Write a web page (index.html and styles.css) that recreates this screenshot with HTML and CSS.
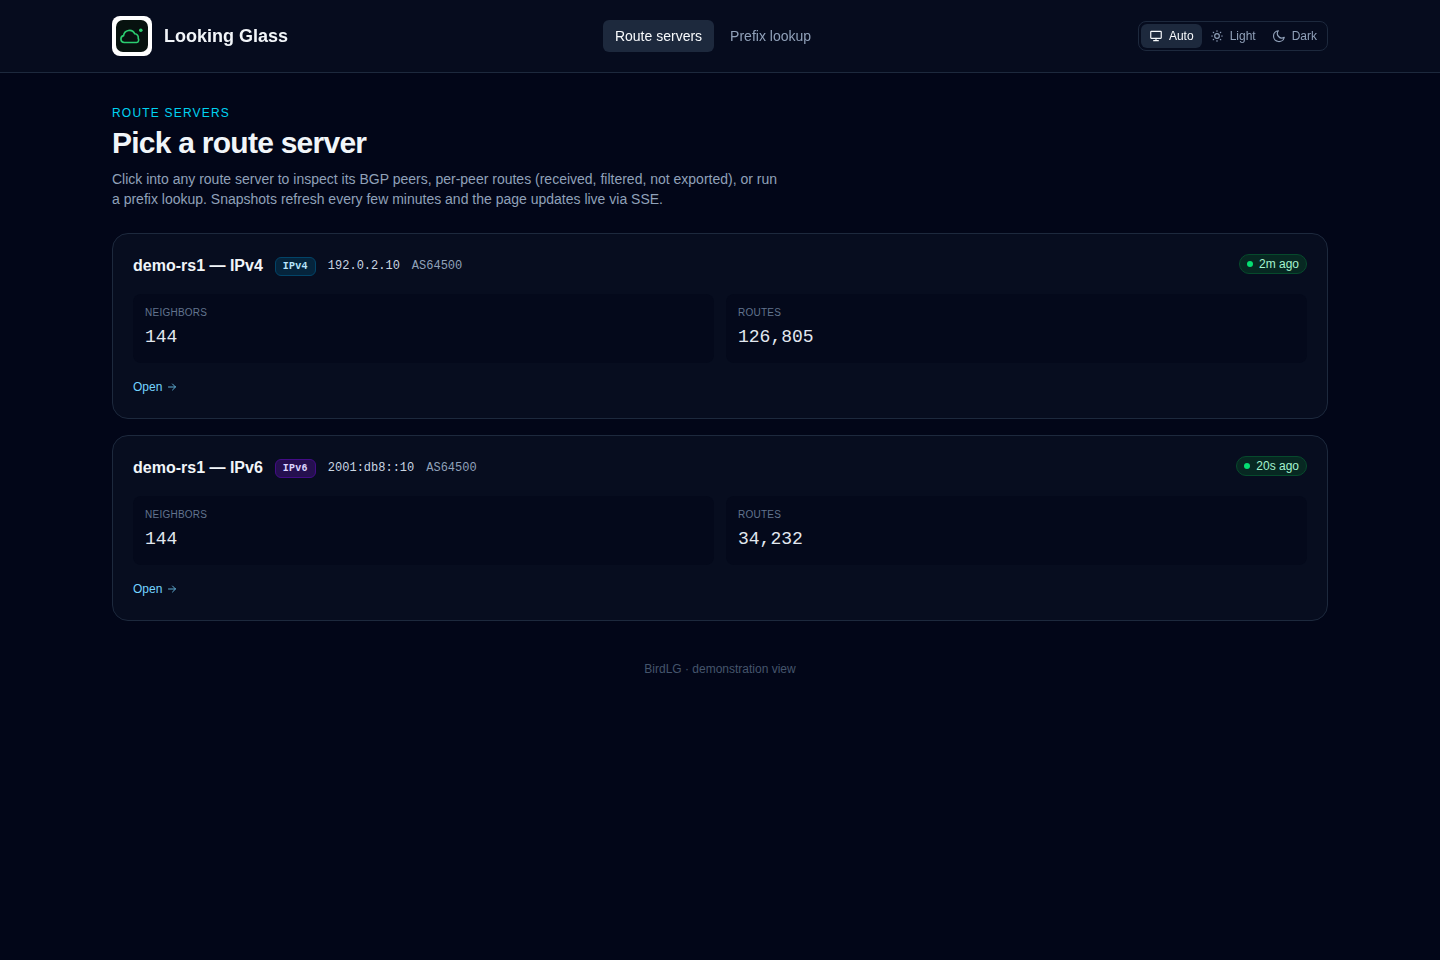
FILE: index.html
```html
<!doctype html>
<html lang="en">
<head>
<meta charset="utf-8" />
<meta name="viewport" content="width=device-width, initial-scale=1" />
<title>Looking Glass</title>
<link rel="stylesheet" href="styles.css">
</head>
<body>
<header class="topbar">
<div class="container topbar-inner">
<a class="brand" href="#">
<svg class="logo" viewBox="0 0 40 40" aria-hidden="true">
<rect width="40" height="40" rx="8" fill="#fff" />
<rect x="4" y="4" width="32" height="32" rx="7" fill="#07120f" />
<path d="M12.2 26.5a3.5 3.5 0 0 1-.6-6.9 5.9 5.9 0 0 1 11.2-1.8 3.6 3.6 0 0 1 3.4 4.4c.9 1.3.5 4.3-1.6 4.3z" fill="none" stroke="#2bcf70" stroke-width="1.6" stroke-linejoin="round" />
<circle cx="28.8" cy="14.3" r="1.8" fill="#2bcf70" />
</svg>
<span>Looking Glass</span>
</a>
<nav class="nav">
<a class="active" href="#">Route servers</a>
<a href="#lookup">Prefix lookup</a>
</nav>
<div class="theme" role="group" aria-label="Theme">
<button type="button" class="active">
<svg viewBox="0 0 24 24" aria-hidden="true"><rect x="3" y="4" width="18" height="12" rx="1" /><path d="M8 20h8M12 16v4" /></svg>
Auto
</button>
<button type="button">
<svg viewBox="0 0 24 24" aria-hidden="true"><circle cx="12" cy="12" r="4" /><path d="M12 3v1M12 20v1M3 12h1M20 12h1M5.6 5.6l.7.7M17.7 17.7l.7.7M5.6 18.4l.7-.7M17.7 6.3l.7-.7" /></svg>
Light
</button>
<button type="button">
<svg viewBox="0 0 24 24" aria-hidden="true"><path d="M11 3a7.6 7.6 0 0 0 10 11.2A9.3 9.3 0 1 1 11 3z" /></svg>
Dark
</button>
</div>
</div>
</header>

<main class="container">
<p class="eyebrow">Route servers</p>
<h1>Pick a route server</h1>
<p class="intro">Click into any route server to inspect its BGP peers, per-peer routes (received, filtered, not exported), or run a prefix lookup. Snapshots refresh every few minutes and the page updates live via SSE.</p>

<div class="servers">
<article class="card">
<div class="card-head">
<h2>demo-rs1 — IPv4</h2>
<span class="badge v4">IPv4</span>
<span class="ip">192.0.2.10</span>
<span class="asn">AS64500</span>
<span class="status">2m ago</span>
</div>
<dl class="stats">
<div><dt>Neighbors</dt><dd>144</dd></div>
<div><dt>Routes</dt><dd>126,805</dd></div>
</dl>
<a class="open" href="#rs1-v4">Open <svg viewBox="0 0 24 24" aria-hidden="true"><path d="M5 12h14M13 6l6 6-6 6" /></svg></a>
</article>

<article class="card">
<div class="card-head">
<h2>demo-rs1 — IPv6</h2>
<span class="badge v6">IPv6</span>
<span class="ip">2001:db8::10</span>
<span class="asn">AS64500</span>
<span class="status">20s ago</span>
</div>
<dl class="stats">
<div><dt>Neighbors</dt><dd>144</dd></div>
<div><dt>Routes</dt><dd>34,232</dd></div>
</dl>
<a class="open" href="#rs1-v6">Open <svg viewBox="0 0 24 24" aria-hidden="true"><path d="M5 12h14M13 6l6 6-6 6" /></svg></a>
</article>
</div>
</main>

<footer>BirdLG · demonstration view</footer>
</body>
</html>
```
FILE: styles.css
```css
* { box-sizing: border-box; }
body { margin: 0; min-height: 100vh; background: #020618; color: #f1f5f9; font: 14px/20px "Liberation Sans", Arial, sans-serif; }
h1, h2, p, dl, dd { margin: 0; }
a { color: inherit; text-decoration: none; }
svg { flex: none; }
.container { max-width: 1280px; margin: 0 auto; padding: 0 32px; }

/* Header */
.topbar { position: sticky; top: 0; z-index: 10; background: rgba(8, 14, 33, 0.8); backdrop-filter: blur(8px); border-bottom: 1px solid #1d293d; }
.topbar-inner { display: flex; align-items: center; justify-content: space-between; padding-top: 16px; padding-bottom: 16px; }
.brand { display: flex; align-items: center; gap: 12px; font-size: 18px; line-height: 28px; font-weight: bold; }
.logo { width: 40px; height: 40px; }
.nav { display: flex; gap: 4px; }
.nav a { padding: 6px 12px; border-radius: 6px; color: #90a1b9; }
.nav a.active { background: #1d293d; color: #f8fafc; }
.theme { display: flex; padding: 2px; border: 1px solid #1d293d; border-radius: 8px; }
.theme button { display: flex; align-items: center; gap: 6px; padding: 4px 8px; border: 0; border-radius: 6px; background: none; color: #90a1b9; font: 12px/16px "Liberation Sans", Arial, sans-serif; cursor: pointer; }
.theme button.active { background: #1d293d; color: #f8fafc; }
.theme svg { width: 14px; height: 14px; fill: none; stroke: currentColor; stroke-width: 2; stroke-linecap: round; stroke-linejoin: round; }

/* Intro */
main.container { padding-top: 32px; }
.eyebrow { font-size: 12px; line-height: 16px; letter-spacing: 0.1em; text-transform: uppercase; color: #00d3f2; }
h1 { margin-top: 4px; font-size: 30px; line-height: 36px; letter-spacing: -0.025em; }
.intro { max-width: 672px; margin-top: 8px; color: #90a1b9; }

/* Route server cards */
.servers { display: grid; gap: 16px; margin-top: 24px; }
.card { padding: 20px; background: #070d1f; border: 1px solid #1d293d; border-radius: 16px; }
.card-head { display: flex; align-items: center; gap: 12px; }
h2 { font-size: 16px; line-height: 24px; }
.badge { padding: 1px 7px; border: 1px solid; border-radius: 6px; font: bold 10px/15px "Liberation Mono", monospace; letter-spacing: 0.025em; }
.v4 { background: #05243c; border-color: #024468; color: #b8e6fe; }
.v6 { background: #25104f; border-color: #430c86; color: #ddd6ff; }
.ip, .asn { font: 12px/16px "Liberation Mono", monospace; color: #cad5e2; }
.asn { color: #90a1b9; }
.status { display: flex; align-items: center; align-self: flex-start; gap: 6px; margin-left: auto; padding: 1px 7px; border: 1px solid #064a2c; border-radius: 10px; background: #072822; color: #a4f4cf; font-size: 12px; line-height: 16px; }
.status::before { content: ''; width: 6px; height: 6px; border-radius: 50%; background: #05df72; }
.stats { display: grid; grid-template-columns: 1fr 1fr; gap: 12px; margin-top: 16px; }
.stats div { padding: 12px; border-radius: 8px; background: #04091b; }
dt { font-size: 10px; line-height: 14px; letter-spacing: 0.025em; text-transform: uppercase; color: #62748e; }
dd { margin-top: 3px; font: 18px/28px "Liberation Mono", monospace; color: #e2e8f0; }
.open { display: flex; align-items: center; gap: 4px; width: max-content; margin: 14px 0 1px; font-size: 12px; line-height: 20px; color: #74d4ff; }
.open svg { width: 12px; height: 12px; fill: none; stroke: currentColor; stroke-width: 2; stroke-linecap: round; stroke-linejoin: round; opacity: 0.8; }

footer { padding: 40px 16px; text-align: center; font-size: 12px; line-height: 16px; color: #45556c; }
```
